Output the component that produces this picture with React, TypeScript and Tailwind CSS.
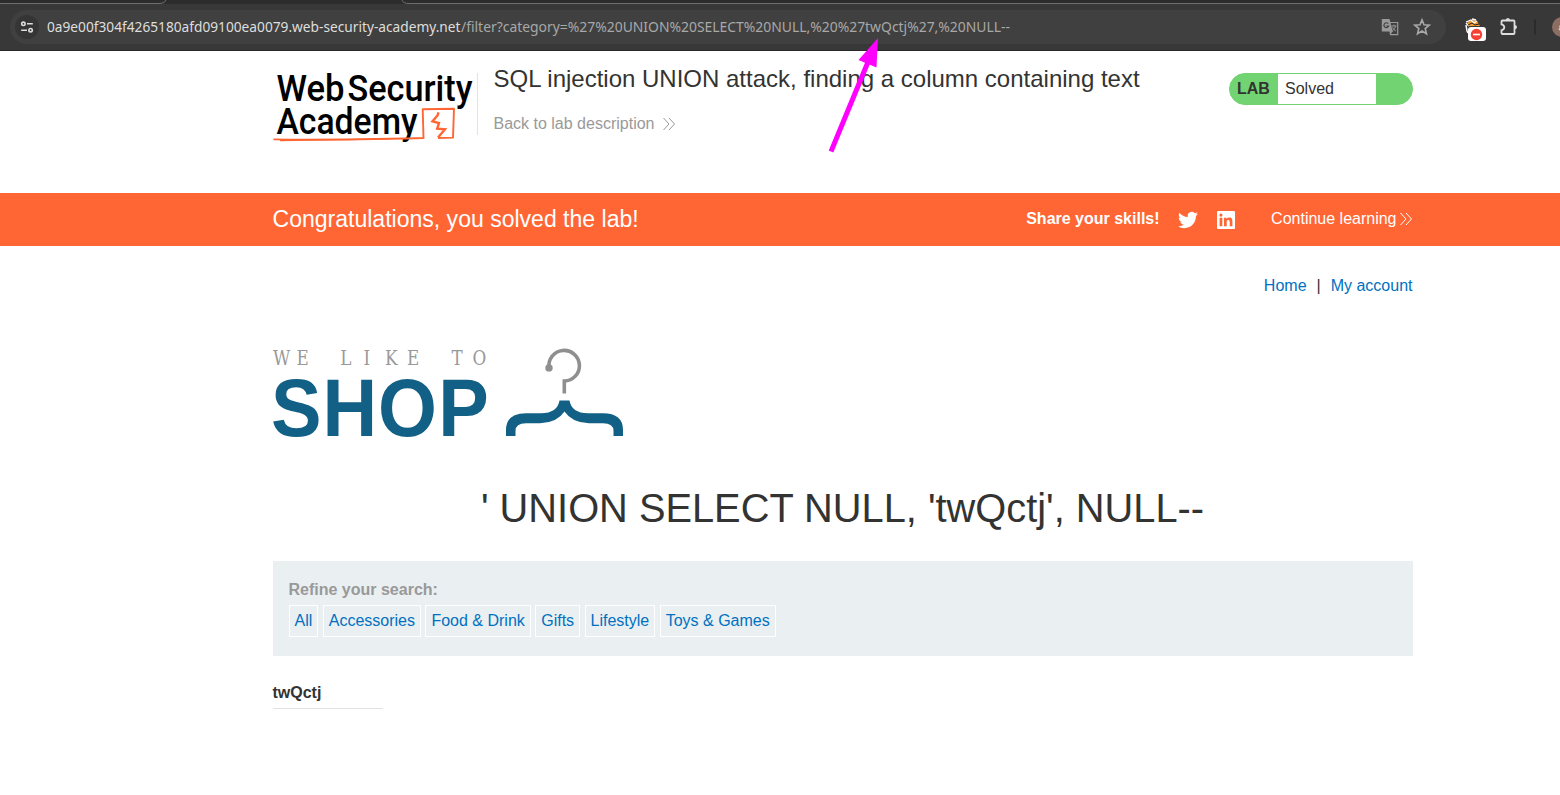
import React from "react";

const sans = "font-['Liberation_Sans',Arial,sans-serif]";

function BrowserBar() {
  return (
    <header className="relative h-[51px] bg-[#383838] border-b border-[#282828]">
      <svg className="absolute left-0 top-0" width="1560" height="8" viewBox="0 0 1560 8">
        <rect width="1560" height="4" fill="#2c2c2c" />
        <path d="M0 3.5H160Q165 3.5 166 0M402 0Q403 3.5 409 3.5H1560" fill="none" stroke="#6e6e6e" />
      </svg>
      <div className="flex h-full items-center pt-1 pl-[10px]">
        <div className="flex h-[34px] w-[1436px] shrink-0 items-center rounded-full bg-[#404040] pl-[5px]">
          <span className="flex h-6 w-6 items-center justify-center rounded-full bg-[#353535]">
            <svg width="14" height="14" viewBox="0 0 14 14" fill="none" stroke="#dcdcdc" strokeWidth="1.6">
              <circle cx="3.4" cy="3.8" r="1.7" />
              <path d="M7 3.8H12.8M1.2 10.2H7" />
              <circle cx="10.6" cy="10.2" r="1.7" />
            </svg>
          </span>
          <svg className="ml-2" width="970" height="24" viewBox="0 0 970 24" fontFamily="'Noto Sans', 'Open Sans', sans-serif" fontSize="14">
            <text x="0" y="17" fill="#dedede" textLength="413.5" lengthAdjust="spacingAndGlyphs">0a9e00f304f4265180afd09100ea0079.web-security-academy.net</text>
            <text x="414" y="17" fill="#a8a8a8" textLength="549" lengthAdjust="spacingAndGlyphs">/filter?category=%27%20UNION%20SELECT%20NULL,%20%27twQctj%27,%20NULL--</text>
          </svg>
          <div className="ml-auto mr-[15px] flex items-center gap-[14px]">
            <svg width="18" height="18" viewBox="0 0 18 18">
              <path d="M8 4.500h8.700v12.200H9.500z" fill="none" stroke="#999" strokeWidth="1.2" />
              <path d="M.800 1h7.700l3.300 12.500H.800z" fill="#999" />
              <path d="M7.200 5.600A2.400 2.400 0 1 0 7.600 8H5.400" fill="none" stroke="#404040" strokeWidth="1.2" />
              <path d="M10.500 8H15.500M13 6.700V8M14.600 8Q14 11 11.600 12.600M11.400 9.400Q12.500 11.800 14.800 13" fill="none" stroke="#999" />
              <path d="M9 13h3l-2.600 3.500z" fill="#999" />
            </svg>
            <svg width="18" height="18" viewBox="0 0 18 18">
              <path d="M9 1.900l2 4.900 5.200.4-4 3.400 1.300 5.200L9 13l-4.500 2.800 1.300-5.200-4-3.400 5.200-.4z" fill="none" stroke="#a8a8a8" strokeWidth="1.600" />
            </svg>
          </div>
        </div>
        <svg className="shrink-0" width="104" height="34" viewBox="1446 10 104 34" overflow="visible">
          <path d="M1466 25l1 6 1 2M1466 23l3 3" stroke="#fff" strokeWidth="1.5" fill="none" />
          <path d="M1467 23Q1471 18 1477 21L1480 26H1469z" fill="#f39a2b" />
          <path d="M1466 22l5-2 3 3 3-2M1472 19l4 1" stroke="#fff" strokeWidth="1.3" fill="none" />
          <path d="M1468 25l4-2 3 2 4-1" stroke="#222" fill="none" />
          <rect x="1468" y="27" width="18" height="14" rx="3" fill="#fff" />
          <circle cx="1476.500" cy="34.500" r="5.700" fill="#f44336" />
          <path d="M1473 34.500h7" stroke="#fff" strokeWidth="1.600" />
          <path d="M1502.500 20.500H1513.500Q1514.500 20.500 1514.500 21.500V33Q1514.500 34 1513.500 34H1502.500Q1501.500 34 1501.500 33V30.300Q1504.300 29.500 1504.300 27.300T1501.500 24.300V21.500Q1501.500 20.500 1502.500 20.500z" fill="none" stroke="#dedede" strokeWidth="1.800" />
          <path d="M1505.700 20.500a2.200 2.500 0 0 1 4.400 0zM1514.500 24.900a2.500 2.200 0 0 1 0 4.400z" fill="#dedede" />
          <path d="M1535 19.500V34.500" stroke="#292929" strokeWidth="1.600" />
        </svg>
        <div className="h-5 w-[10px] shrink-0 overflow-hidden">
          <svg className="ml-[2px]" width="20" height="20" viewBox="0 0 20 20">
            <circle cx="10" cy="10" r="10" fill="#8d6e63" />
            <path d="M7 9.500Q8.500 8 10 9.500V13Q7 14 7 12T10 11" fill="none" stroke="#e8dedb" />
          </svg>
        </div>
      </div>
    </header>
  );
}

function AcademyLogo() {
  return (
    <svg className="shrink-0" width="204.500" height="74" viewBox="273 70 204.500 74" overflow="visible">
      <g fontFamily="Roboto, sans-serif" fontWeight="500" fontSize="36.800" fill="#000">
        <text x="276.500" y="101" textLength="68" lengthAdjust="spacingAndGlyphs">Web</text>
        <text x="347.500" y="101" textLength="125" lengthAdjust="spacingAndGlyphs">Security</text>
        <text x="276.500" y="134" textLength="141" lengthAdjust="spacingAndGlyphs">Academy</text>
      </g>
      <path d="M273.500 139.400Q330 140.200 423.500 138L422.700 109.200L454 108.700L453 137.600L438 138" fill="none" stroke="#ff6633" strokeWidth="1.900" strokeLinejoin="round" />
      <path d="M280 140.600L390 139" stroke="#ff6633" strokeWidth="1.200" />
      <path d="M438.500 112.300L437.500 115.500L432.500 121.300L439 123L437.200 128.700L445 129.300L438 137.600" fill="none" stroke="#ff6633" strokeWidth="2.400" />
    </svg>
  );
}

function Chevrons({ className }: { className: string }) {
  return (
    <svg className={className} width="12" height="14" viewBox="0 0 12 14" fill="none" stroke="currentColor">
      <path d="M.5 1L6 7L.5 13M6 1L11.500 7L6 13" />
    </svg>
  );
}

function ShopLogo() {
  return (
    <svg width="352" height="92" viewBox="272 347 352 92" overflow="visible">
      <g transform="translate(273 364.800) scale(.8 1)" fontFamily="'DejaVu Serif', serif" fontSize="21" fill="#999">
        <text x="0 29.500">WE</text>
        <text x="84 113 140 167.500">LIKE</text>
        <text x="223 249.500">TO</text>
      </g>
      <text transform="translate(271 436) scale(.935 1)" x="0 55 114.500 179" fontFamily="'Liberation Sans', Arial, sans-serif" fontWeight="bold" fontSize="81" fill="#126085">SHOP</text>
      <path d="M549 368A15.300 15.300 0 1 1 564.300 381V393.500" fill="none" stroke="#8f8f8f" strokeWidth="3.600" />
      <circle cx="549" cy="367.900" r="3.700" fill="#8f8f8f" />
      <path d="M559.500 400.500H569.500Q571.500 413 588 413.300H603Q623 413.500 623 430V436H613.500V431Q613.500 423.300 603 423.300H589Q572 422.800 564.500 411.500Q557 422.800 540 423.300H526Q515.500 423.300 515.500 431V436H506V430Q506 413.500 526 413.300H541Q557.500 413 559.500 400.500z" fill="#126085" />
    </svg>
  );
}

const filters = ["All", "Accessories", "Food & Drink", "Gifts", "Lifestyle", "Toys & Games"];

export default function App() {
  return (
    <div className={`relative h-[795px] w-[1560px] overflow-hidden bg-white text-base leading-[18px] text-[#333332] ${sans}`}>
      <BrowserBar />
      <section className="ml-[272.5px] flex h-[142px] w-[1140px] items-start pt-[19px]">
        <AcademyLogo />
        <div className="mt-[3px] h-[62px] border-l border-[#e4e4e4] pl-[15.5px]">
          <h2 className="-mt-[6px] text-2xl leading-[24px] whitespace-nowrap">SQL injection UNION attack, finding a column containing text</h2>
          <a className="mt-[24px] flex items-center text-[#999999]">
            Back to lab description
            <Chevrons className="ml-[8.5px]" />
          </a>
        </div>
        <div className="mt-[3px] ml-auto flex h-8 w-[184px] overflow-hidden rounded-2xl border border-[#71d371] bg-[#71d371] leading-[30px]">
          <span className="w-12 pl-[7.5px] font-bold">LAB</span>
          <span className="w-[98px] bg-white pl-[7.5px]">Solved</span>
        </div>
      </section>
      <section className="h-[53px] bg-[#ff6633] text-white">
        <div className="ml-[272.5px] flex h-[52px] w-[1140px] items-center">
          <h4 className="text-[23.04px]">Congratulations, you solved the lab!</h4>
          <span className="ml-auto font-bold">Share your skills!</span>
          <svg className="mt-px ml-[18.500px]" width="20" height="20" viewBox="0 0 24 24" fill="currentColor">
            <path d="M23.953 4.570a10 10 0 01-2.825.775 4.958 4.958 0 002.163-2.723c-.951.555-2.005.959-3.127 1.184a4.920 4.920 0 00-8.384 4.482C7.690 8.095 4.067 6.130 1.640 3.162a4.822 4.822 0 00-.666 2.475c0 1.710.870 3.213 2.188 4.096a4.904 4.904 0 01-2.228-.616v.060a4.923 4.923 0 003.946 4.827 4.996 4.996 0 01-2.212.085 4.936 4.936 0 004.604 3.417 9.867 9.867 0 01-6.102 2.105c-.390 0-.779-.023-1.170-.067a13.995 13.995 0 007.557 2.209c9.053 0 13.998-7.496 13.998-13.985 0-.210 0-.420-.015-.630A9.935 9.935 0 0024 4.590z" />
          </svg>
          <svg className="mt-px ml-[18.500px]" width="18" height="18" viewBox="0 0 18 18">
            <rect width="18" height="18" rx="1" fill="#fff" />
            <path d="M2.600 6.800H5.300V15.300H2.600zM7 6.800H9.600V8Q10.500 6.600 12.200 6.600C15 6.600 15.400 8.500 15.400 10.700V15.300H12.700V11.200C12.700 10 12.600 8.900 11.200 8.900S9.700 10 9.700 11.200V15.300H7z" fill="#ff6633" />
            <circle cx="3.950" cy="4.100" r="1.550" fill="#ff6633" />
          </svg>
          <a className="ml-[36.5px] flex items-center">
            Continue learning
            <Chevrons className="mr-[0.5px] ml-[3.5px]" />
          </a>
        </div>
      </section>
      <main className="ml-[272.5px] w-[1140px]">
        <nav className="flex justify-end pt-[31px] text-[#0071c1]">
          <a>Home</a>
          <span className="mx-[10px] text-[#333332]">|</span>
          <a>My account</a>
        </nav>
        <div className="-ml-[0.5px] pt-[52px]"><ShopLogo /></div>
        <h1 className="pt-[46px] text-center text-[39.8px] leading-[46px]">' UNION SELECT NULL, 'twQctj', NULL--</h1>
        <section className="mt-[30px] h-[95px] bg-[#eaeff2] px-4 pt-5">
          <p className="font-bold text-[#999999]">Refine your search:</p>
          <div className="mt-[6px] flex gap-[4.450px] text-[#0071c1]">
            {filters.map((f) => (
              <a key={f} className="h-8 border border-white px-[5px] leading-[30px]">{f}</a>
            ))}
          </div>
        </section>
        <div className="mt-[28px] h-[25px] w-[110px] border-b border-[#e2e2e2] font-bold">twQctj</div>
      </main>
      <svg className="absolute left-[820px] top-[30px]" width="70" height="130" viewBox="820 30 70 130">
        <path d="M831 151.500L868 62" stroke="#ff00ff" strokeWidth="5" />
        <path d="M878 38L858.500 60L876.500 67.500z" fill="#ff00ff" />
      </svg>
    </div>
  );
}
